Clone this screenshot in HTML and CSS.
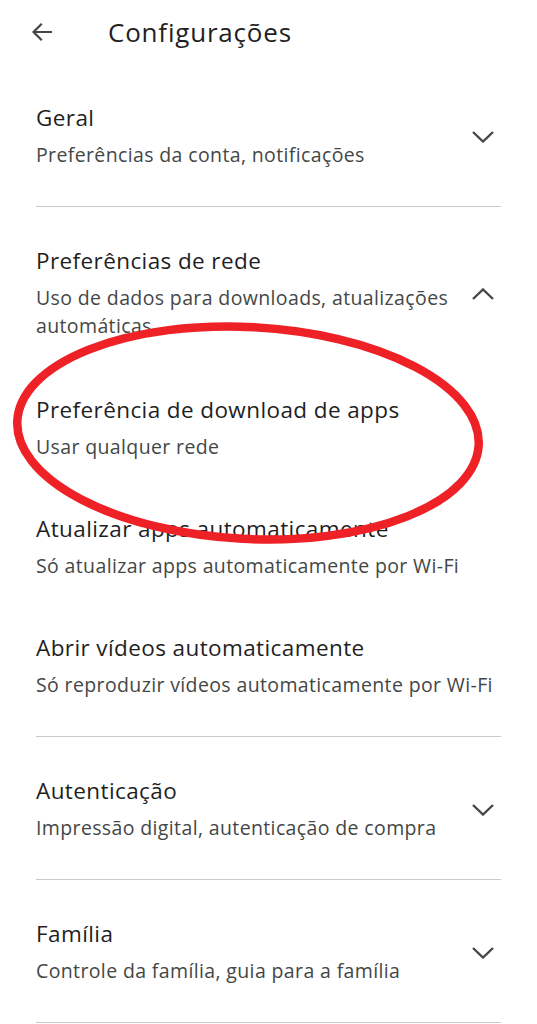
FILE: index.html
```html
<!DOCTYPE html>
<html lang="pt-BR">
<head>
<meta charset="utf-8">
<title>Configurações</title>
<link rel="stylesheet" href="styles.css">
</head>
<body>
<div class="page">
  <header class="topbar">
    <svg class="back" viewBox="0 0 24 24" width="24" height="24"><path d="M21 12H4M11 4.5L3.5 12L11 19.5" fill="none" stroke="#444746" stroke-width="2.2" stroke-linecap="square"/></svg>
    <h1 class="title">Configurações</h1>
  </header>

  <section class="section">
    <div class="row">
      <div class="text">
        <div class="item-title">Geral</div>
        <div class="item-sub">Preferências da conta, notificações</div>
      </div>
      <svg class="chev" viewBox="0 0 24 12" width="24" height="12"><path d="M2 1L12 10.5L22 1" fill="none" stroke="#444746" stroke-width="2.4"/></svg>
    </div>
  </section>

  <section class="section">
    <div class="row">
      <div class="text">
        <div class="item-title">Preferências de rede</div>
        <div class="item-sub">Uso de dados para downloads, atualizações automáticas</div>
      </div>
      <svg class="chev" viewBox="0 0 24 12" width="24" height="12"><path d="M2 11L12 1.5L22 11" fill="none" stroke="#444746" stroke-width="2.4"/></svg>
    </div>
    <div class="subitems">
      <div class="text">
        <div class="item-title">Preferência de download de apps</div>
        <div class="item-sub">Usar qualquer rede</div>
      </div>
      <div class="text">
        <div class="item-title">Atualizar apps automaticamente</div>
        <div class="item-sub">Só atualizar apps automaticamente por Wi-Fi</div>
      </div>
      <div class="text">
        <div class="item-title">Abrir vídeos automaticamente</div>
        <div class="item-sub">Só reproduzir vídeos automaticamente por Wi-Fi</div>
      </div>
    </div>
  </section>

  <section class="section">
    <div class="row">
      <div class="text">
        <div class="item-title">Autenticação</div>
        <div class="item-sub">Impressão digital, autenticação de compra</div>
      </div>
      <svg class="chev" viewBox="0 0 24 12" width="24" height="12"><path d="M2 1L12 10.5L22 1" fill="none" stroke="#444746" stroke-width="2.4"/></svg>
    </div>
  </section>

  <section class="section">
    <div class="row">
      <div class="text">
        <div class="item-title">Família</div>
        <div class="item-sub">Controle da família, guia para a família</div>
      </div>
      <svg class="chev" viewBox="0 0 24 12" width="24" height="12"><path d="M2 1L12 10.5L22 1" fill="none" stroke="#444746" stroke-width="2.4"/></svg>
    </div>
  </section>

  <svg class="mark" viewBox="0 0 537 1024" width="537" height="1024">
    <ellipse cx="248" cy="433" rx="231" ry="106" transform="rotate(3 248 433)" fill="none" stroke="#ee2226" stroke-width="8.5"/>
  </svg>
</div>
</body>
</html>
```

FILE: styles.css
```css
html, body {
  margin: 0;
  padding: 0;
  background: #ffffff;
}
.page {
  position: relative;
  width: 537px;
  height: 1024px;
  overflow: hidden;
  font-family: "Open Sans", Roboto, sans-serif;
}
.topbar {
  height: 64px;
  display: flex;
  align-items: center;
  padding-left: 30px;
  box-sizing: border-box;
}
.back {
  display: block;
}
.title {
  margin: 0 0 0 54px;
  font-size: 26px;
  font-weight: 400;
  letter-spacing: 0.8px;
  color: #1f1f1f;
  line-height: 30px;
}
.section {
  margin: 0 36px;
  padding: 40px 0 37px;
  border-bottom: 1px solid #c9c9c9;
}
.row {
  display: flex;
  align-items: center;
  justify-content: space-between;
}
.text {
  display: flex;
  flex-direction: column;
  gap: 9px;
}
.row .text {
  max-width: 420px;
}
.chev {
  display: block;
  margin-right: 6px;
  flex: none;
}
.item-title {
  font-size: 22.5px;
  letter-spacing: 0.4px;
  line-height: 28px;
  color: #1f1f1f;
}
.item-sub {
  font-size: 19.5px;
  letter-spacing: 0.37px;
  line-height: 28px;
  color: #444746;
}
.subitems {
  display: flex;
  flex-direction: column;
  gap: 54px;
  margin-top: 56px;
}
.mark {
  position: absolute;
  left: 0;
  top: 0;
  pointer-events: none;
}
```
